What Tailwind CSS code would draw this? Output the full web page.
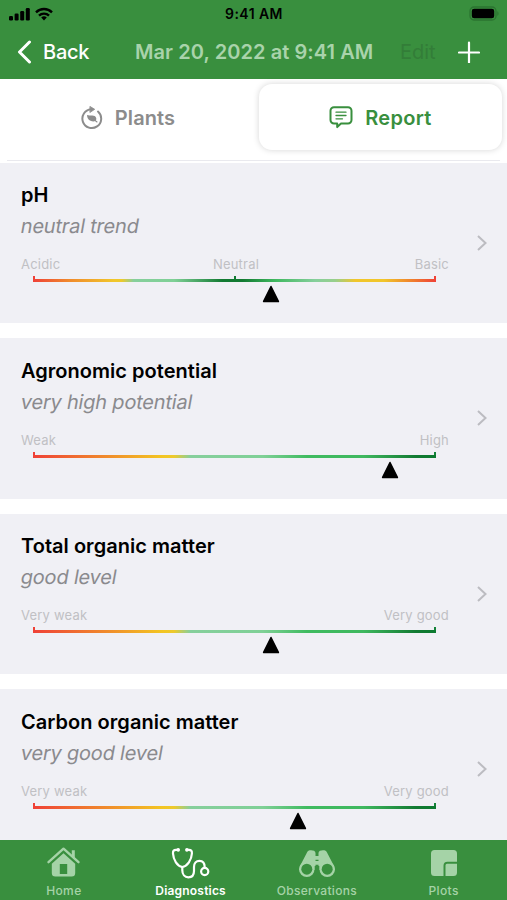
<!DOCTYPE html>
<html lang="en">
<head>
    <meta charset="UTF-8">
    <meta name="viewport" content="width=device-width, initial-scale=1.0">
    <title>Diagnostics report</title>
    <script src="https://cdn.jsdelivr.net/npm/@tailwindcss/browser@4"></script>
</head>
<body class="h-[900px] overflow-hidden bg-white font-['Inter','Liberation_Sans',sans-serif]">
<div class="h-full flex flex-col">

    <!-- Header -->
    <header class="h-[79px] shrink-0 bg-[#398f3e]">
        <div class="h-[27px] grid grid-cols-3 items-center px-2">
            <div class="flex items-center gap-[5px]">
                <svg class="w-[22px] h-[14px]" viewBox="0 0 22 14">
                    <rect x="1" y="9" width="4" height="4.5" rx="1.2"/>
                    <rect x="6.6" y="6.5" width="4" height="7" rx="1.2"/>
                    <rect x="12.2" y="4" width="4" height="9.5" rx="1.2"/>
                    <rect x="17.8" y="1" width="4" height="12.5" rx="1.2"/>
                </svg>
                <svg class="w-[18px] h-[14px]" viewBox="0 0 18 14" fill="none" stroke="#000" stroke-width="2.4">
                    <path d="M1 5.3a11.4 11.4 0 0 1 16 0"/>
                    <path d="M4 8.6a7.2 7.2 0 0 1 10 0"/>
                    <path d="M9 13.5l-2.8-3a4 4 0 0 1 5.6 0z" fill="#000" stroke="none"/>
                </svg>
            </div>
            <div class="text-center text-[14px] font-semibold tracking-[0.45px] translate-x-[0.5px]">9:41 AM</div>
            <svg class="justify-self-end w-[30px] h-[16px]" viewBox="0 0 30 16">
                <rect x="1" y="1" width="26" height="13" rx="4" fill="none" stroke="#2b7430" stroke-width="1.3"/>
                <rect x="2.8" y="2.7" width="22.4" height="9.6" rx="2.4"/>
                <path d="M28.3 5.2c1.6.6 1.6 4 0 4.6z" fill="#2b7430"/>
            </svg>
        </div>
        <div class="h-[50px] flex items-center text-[20px]">
            <svg class="ml-[17px] w-[15px] h-[24px]" viewBox="0 0 15 24" fill="none" stroke="#fff" stroke-width="3" stroke-linecap="round" stroke-linejoin="round">
                <path d="M12.5 2L2.500 12l10 10"/>
            </svg>
            <span class="ml-[11px] w-[92px] text-white tracking-[-0.25px] font-medium">Back</span>
            <span class="w-[265px] text-[#a9d3ab] font-semibold tracking-[0.08px] whitespace-nowrap">Mar 20, 2022 at 9:41 AM</span>
            <span class="w-[58px] text-[#337d38]">Edit</span>
            <svg class="w-[22px] h-[22px]" viewBox="0 0 22 22" stroke="#fff" stroke-width="2.2" stroke-linecap="round">
                <path d="M11 1.5v20M1 11.5h20"/>
            </svg>
        </div>
    </header>

    <!-- Tabs -->
    <div class="h-[83.5px] shrink-0">
        <div class="h-[81.5px] mx-[7px] flex border-b border-[#e9e9ee]">
            <div class="w-[242px] h-[77px] shrink-0 flex items-center justify-center gap-3 text-[#8c8c8c]">
                <svg class="w-[22px] h-[24px]" viewBox="0 0 22 24" fill="none" stroke="currentColor" stroke-width="2" stroke-linecap="round">
                    <path d="M17 5.600A9.400 9.400 0 1 1 10 3.300"/>
                    <path d="M9.200.6l4.500 2.700-4.500 3z" fill="currentColor" stroke-width=".8"/>
                    <path d="M6 9c3.200 1.300 8-.9 9.200 3.100.3 1.500-.2 2.500-.7 2.900-3 1.200-8.300 0-8.500-6z" fill="currentColor" stroke="none"/>
                    <path d="M14 14.300l2 1.700" stroke-width="1.100"/>
                </svg>
                <span class="text-[20px] font-semibold tracking-[0.1px]">Plants</span>
            </div>
            <div class="w-[243px] h-[66px] ml-[10px] mt-[5px] shrink-0 rounded-[13px] bg-white shadow-[0_0_6px_rgba(0,0,0,0.17)] flex items-center justify-center gap-3 text-[#398f3e]">
                <svg class="w-[24px] h-[24px]" viewBox="0 0 24 24" fill="none" stroke="currentColor" stroke-width="2" stroke-linecap="round" stroke-linejoin="round">
                    <path d="M5 2.200h14a3.500 3.500 0 0 1 3.500 3.500v9.300a3.500 3.500 0 0 1-3.500 3.500h-7l-3.800 3.600v-3.600H5A3.500 3.500 0 0 1 1.500 15V5.700A3.500 3.500 0 0 1 5 2.200z"/>
                    <path d="M7 7.200h10M7 10.500h10M7 13.800h6.500" stroke-width="1.300"/>
                </svg>
                <span class="text-[20px] font-semibold tracking-[0.3px] translate-y-[1px]">Report</span>
            </div>
        </div>
    </div>

    <!-- Report cards -->
    <main id="cards" class="flex-1 min-h-0 overflow-hidden flex flex-col gap-[15px]"></main>

    <!-- Bottom navigation -->
    <nav class="h-[60px] shrink-0 bg-[#398f3e] grid grid-cols-4 text-[12px] font-medium text-[#a5d3a7]">
        <div class="flex flex-col items-center pt-[6px]">
            <svg class="w-[34px] h-[34px] translate-x-[0.5px]" viewBox="0 0 34 34" fill="currentColor">
                <path d="M17 7.200L5.300 17.800V27a3.500 3.500 0 0 0 3.500 3.500h16.400a3.500 3.500 0 0 0 3.500-3.500v-9.200z"/>
                <path d="M2 16.200L17 2.700l15 13.500" fill="none" stroke="#398f3e" stroke-width="4.600"/>
                <path d="M25.300 4.200h3v8.300l-3-2.700z"/>
                <path d="M2 16.200L17 2.700l15 13.500" fill="none" stroke="currentColor" stroke-width="2.400" stroke-linecap="round" stroke-linejoin="round"/>
                <path d="M13.300 18h7.400v10h-7.400z" fill="#398f3e"/>
            </svg>
            <span class="mt-[2px] tracking-[0.4px] translate-x-[0.5px]">Home</span>
        </div>
        <div class="flex flex-col items-center pt-[6px] text-white">
            <svg class="w-[40px] h-[34px]" viewBox="0 0 40 34" fill="none" stroke="currentColor" stroke-width="2.200" stroke-linecap="round" stroke-linejoin="round">
                <path d="M8 3.800H6C3.700 3.800 2.800 5.200 3 7.500c.4 6.500 4.200 12.500 9.300 13.500 5.200-1 9.200-7 9.600-13.500.2-2.300-.7-3.700-3-3.700H17"/>
                <path d="M8.200 3.800v.2M16.900 3.800v.2" stroke-width="3.600"/>
                <path d="M12.300 21v3.300c0 4.200 2.500 7 6 7 3.700 0 5.700-2.500 5.700-6.300v-4c0-3.600 2.200-6.200 5.400-6.200s5.300 2.500 5.300 6.500"/>
                <circle cx="34.700" cy="25.500" r="3.600"/>
            </svg>
            <span class="mt-[2px] tracking-[0.2px] font-semibold translate-x-[0.5px]">Diagnostics</span>
        </div>
        <div class="flex flex-col items-center pt-[6px]">
            <svg class="w-[38px] h-[34px]" viewBox="0 0 38 34" fill="currentColor">
                <path d="M9 6.500c.5-1.600 2-2.200 4-2.200 2.200 0 4.500.7 4.500 2.700V24H1.200l.8-4z"/>
                <path d="M29 6.500c-.5-1.600-2-2.200-4-2.200-2.200 0-4.500.7-4.500 2.700V24h16.300l-.8-4z"/>
                <path d="M16.500 10h5v3.700h-5zM16.500 15h5v3.800h-5z"/>
                <circle cx="8.800" cy="23.200" r="7.800"/>
                <circle cx="29.200" cy="23.200" r="7.800"/>
                <circle cx="8.800" cy="23.200" r="5.500" fill="#398f3e"/>
                <circle cx="29.200" cy="23.200" r="5.500" fill="#398f3e"/>
                <path d="M16.700 20h4.600v6h-4.600z" fill="#398f3e"/>
            </svg>
            <span class="mt-[2px] tracking-[0.3px]">Observations</span>
        </div>
        <div class="flex flex-col items-center pt-[6px]">
            <svg class="w-[28px] h-[34px]" viewBox="0 0 28 34" fill="currentColor">
                <path d="M4.500 4h19A3.500 3.500 0 0 1 27 7.500v8.200H17.500a4 4 0 0 0-4 4V30h-9A3.500 3.500 0 0 1 1 26.500v-19A3.500 3.500 0 0 1 4.500 4z"/>
                <path d="M17 17.800h10v8.700a3.500 3.500 0 0 1-3.500 3.500h-8V19.300a1.500 1.500 0 0 1 1.500-1.500z"/>
            </svg>
            <span class="mt-[2px] tracking-[0.4px]">Plots</span>
        </div>
    </nav>
</div>

<script>
    const levelScale = 'linear-gradient(90deg, #ef4137 0%, #f08a2c 18%, #f3c522 32%, #edc92c 35%, #86cf9c 39%, #7fd096 57%, #3fbb60 68%, #3fb85f 82%, #127a32 95%, #0c7a30 100%)';
    const phScale = 'linear-gradient(90deg, #ef4137 0%, #f08a2c 9%, #f1c62b 20%, #edc92c 22%, #86cf9c 25%, #7fd096 35%, #127a32 47%, #127a32 52%, #3fb85f 60%, #86cf9c 70%, #98cf8c 75%, #f1c62b 80%, #f1c62b 87%, #f08a2c 93%, #ef4137 100%)';

    // marker is the x offset of the triangle along the scale, in px
    const cards = [
        { title: 'pH', level: 'neutral trend', labels: ['Acidic', 'Neutral', 'Basic'], scale: phScale, end: '#ef4137', marker: 238 },
        { title: 'Agronomic potential', level: 'very high potential', labels: ['Weak', '', 'High'], scale: levelScale, end: '#138238', marker: 357 },
        { title: 'Total organic matter', level: 'good level', labels: ['Very weak', '', 'Very good'], scale: levelScale, end: '#138238', marker: 238 },
        { title: 'Carbon organic matter', level: 'very good level', labels: ['Very weak', '', 'Very good'], scale: levelScale, end: '#138238', marker: 265 },
    ];

    document.getElementById('cards').innerHTML = cards.map(card => `
        <section class="h-[160.5px] shrink-0 bg-[#f0f0f5] flex items-center">
            <div class="w-[428px] ml-[21px] h-full pt-[18.5px]">
                <h2 class="h-7 leading-7 text-[20px] font-semibold tracking-[0.03px] text-black">${card.title}</h2>
                <p class="h-7 leading-7 mt-[3px] text-[20px] -skew-x-[10deg] origin-[0_50%] tracking-[-0.2px] text-[#8a8a8e]">${card.level}</p>
                <div class="mt-4 h-4 leading-4 grid grid-cols-3 text-[13px] tracking-[0.2px] text-[#c0c0c4]">
                    <span>${card.labels[0]}</span>
                    <span class="text-center translate-x-[1px]">${card.labels[1]}</span>
                    <span class="text-right">${card.labels[2]}</span>
                </div>
                <div class="mt-1 mx-3 w-[403px]">
                    <div class="h-[3px] flex justify-between">
                        <i class="w-[2px] bg-[#ef4137]"></i>
                        ${card.labels[1] ? '<i class="w-[2px] bg-[#127a32]"></i>' : ''}
                        <i class="w-[2px]" style="background:${card.end}"></i>
                    </div>
                    <div class="h-[3px]" style="background:${card.scale}"></div>
                    <svg class="mt-[3px] w-[17px] h-[18px] -translate-x-[8.5px]" style="margin-left:${card.marker}px" viewBox="0 0 17 18">
                        <path d="M8.500 1.500L16 16.500H1z" stroke="#000" stroke-width="1.500" stroke-linejoin="round"/>
                    </svg>
                </div>
            </div>
            <svg class="ml-[28px] w-[10px] h-[16px]" viewBox="0 0 10 16" fill="none" stroke="#bcbcc1" stroke-width="2">
                <path d="M1 1l7.500 7L1 15"/>
            </svg>
        </section>`).join('');
</script>
</body>
</html>
